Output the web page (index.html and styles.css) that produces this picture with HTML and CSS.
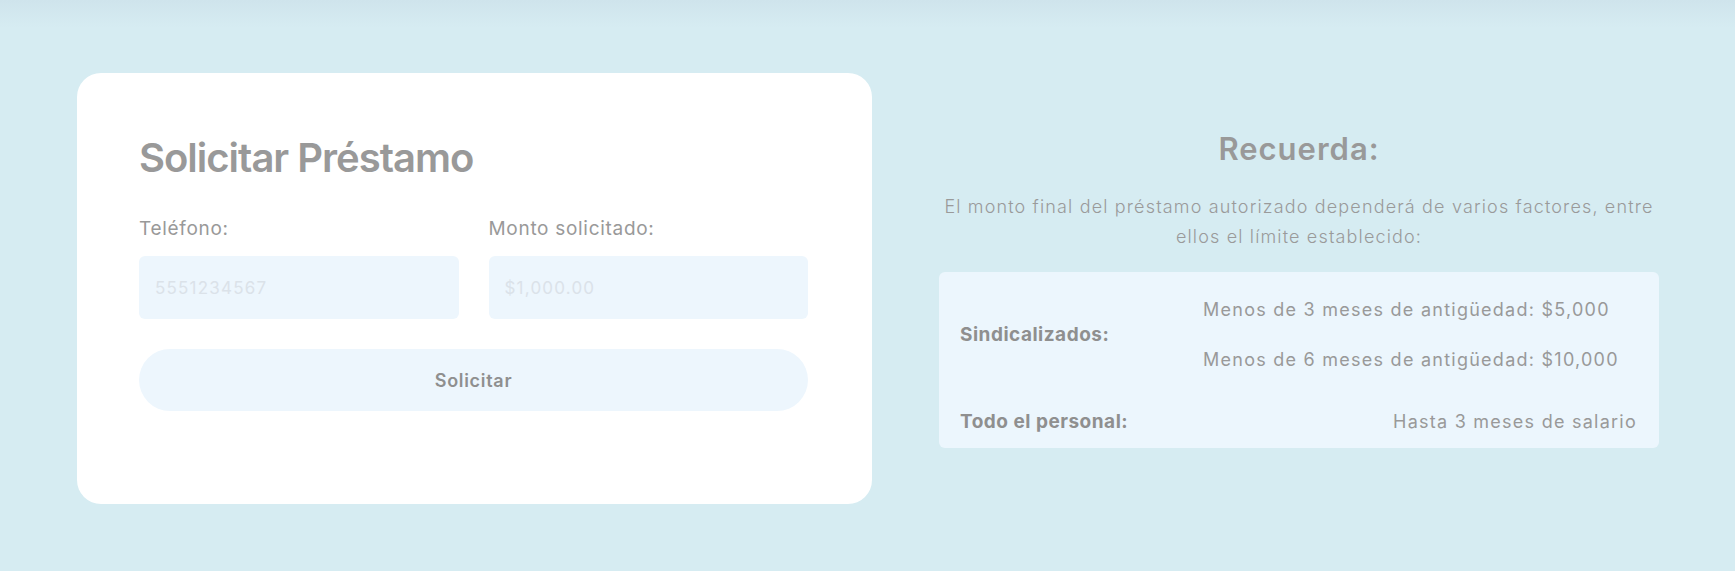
FILE: index.html
```html
<!DOCTYPE html>
<html lang="es">
<head>
<meta charset="utf-8">
<title>Solicitar Préstamo</title>
<link rel="stylesheet" href="styles.css">
</head>
<body>
<main class="page">
  <section class="card">
    <h1 class="card-title">Solicitar Préstamo</h1>
    <form class="loan-form">
      <div class="fields">
        <label class="field">
          <span class="field-label">Teléfono:</span>
          <input class="field-input" type="text" placeholder="5551234567">
        </label>
        <label class="field">
          <span class="field-label">Monto solicitado:</span>
          <input class="field-input" type="text" placeholder="$1,000.00">
        </label>
      </div>
      <button class="submit" type="button">Solicitar</button>
    </form>
  </section>
  <aside class="info">
    <h2 class="info-title">Recuerda:</h2>
    <p class="info-text">El monto final del préstamo autorizado dependerá de varios factores, entre ellos el límite establecido:</p>
    <div class="limits">
      <div class="limit-row limit-row-multi">
        <span class="limit-label">Sindicalizados:</span>
        <div class="limit-values-stack">
          <p class="limit-value">Menos de 3 meses de antigüedad: $5,000</p>
          <p class="limit-value">Menos de 6 meses de antigüedad: $10,000</p>
        </div>
      </div>
      <div class="limit-row limit-row-single">
        <span class="limit-label">Todo el personal:</span>
        <span class="limit-value">Hasta 3 meses de salario</span>
      </div>
    </div>
  </aside>
</main>
</body>
</html>
```
FILE: styles.css
```css
* {
  box-sizing: border-box;
}

html, body {
  margin: 0;
  padding: 0;
}

body {
  width: 1735px;
  height: 571px;
  overflow: hidden;
  background: linear-gradient(to bottom, #cfe4ec 0px, #d6ecf2 28px, #d6ecf2 100%);
  font-family: "Inter", "Liberation Sans", sans-serif;
  color: #999999;
}

.page {
  display: flex;
  align-items: flex-start;
  padding: 73px 76px 0 77px;
}

.card {
  width: 795px;
  height: 431px;
  background: #ffffff;
  border-radius: 24px;
  padding: 61px 64px 0 62px;
}

.card-title {
  margin: 0;
  font-size: 40px;
  line-height: 48px;
  font-weight: 600;
  color: #999999;
  letter-spacing: -1px;
}

.loan-form {
  margin-top: 36px;
}

.fields {
  display: flex;
  gap: 30px;
}

.field {
  flex: 1;
  display: flex;
  flex-direction: column;
}

.field-label {
  font-size: 19px;
  line-height: 22px;
  font-weight: 400;
  letter-spacing: 0.7px;
  color: #999999;
}

.field-input {
  margin-top: 16px;
  height: 63px;
  width: 100%;
  border: none;
  outline: none;
  border-radius: 6px;
  background: #edf6fd;
  padding: 0 16px;
  font-family: inherit;
  font-size: 17px;
  letter-spacing: 1.2px;
  color: #999999;
}

.field-input::placeholder {
  color: #dbe2e9;
}

.submit {
  display: block;
  margin-top: 30px;
  width: 100%;
  height: 62px;
  border: none;
  border-radius: 31px;
  background: #edf6fd;
  font-family: inherit;
  font-size: 18px;
  font-weight: 600;
  letter-spacing: 0.7px;
  color: #8f8f8f;
}

.info {
  width: 720px;
  margin-left: 67px;
  padding-top: 57px;
  text-align: center;
}

.info-title {
  margin: 0;
  font-size: 31px;
  line-height: 38px;
  font-weight: 600;
  letter-spacing: 1px;
  color: #999999;
}

.info-text {
  margin: 24px 0 0;
  font-size: 18px;
  line-height: 30px;
  font-weight: 300;
  letter-spacing: 1.15px;
  color: #9a9a9a;
}

.limits {
  margin-top: 20px;
  height: 176px;
  background: #ecf6fd;
  border-radius: 6px;
  padding: 26px 22px 0 21px;
  text-align: left;
}

.limit-row {
  display: flex;
}

.limit-row-multi {
  align-items: center;
}

.limit-row-single {
  margin-top: 38px;
  align-items: baseline;
  justify-content: space-between;
}

.limit-label {
  width: 214px;
  flex: none;
  font-size: 19px;
  line-height: 24px;
  font-weight: 700;
  letter-spacing: 0.5px;
  color: #8f8f8f;
}

.limit-row-single .limit-label {
  width: auto;
}

.limit-values-stack {
  flex: 1;
  display: flex;
  flex-direction: column;
  align-items: flex-start;
  gap: 26px;
  padding-left: 29px;
}

.limit-value {
  margin: 0;
  font-size: 18px;
  line-height: 24px;
  font-weight: 400;
  letter-spacing: 1.25px;
  white-space: nowrap;
  color: #999999;
}
```
